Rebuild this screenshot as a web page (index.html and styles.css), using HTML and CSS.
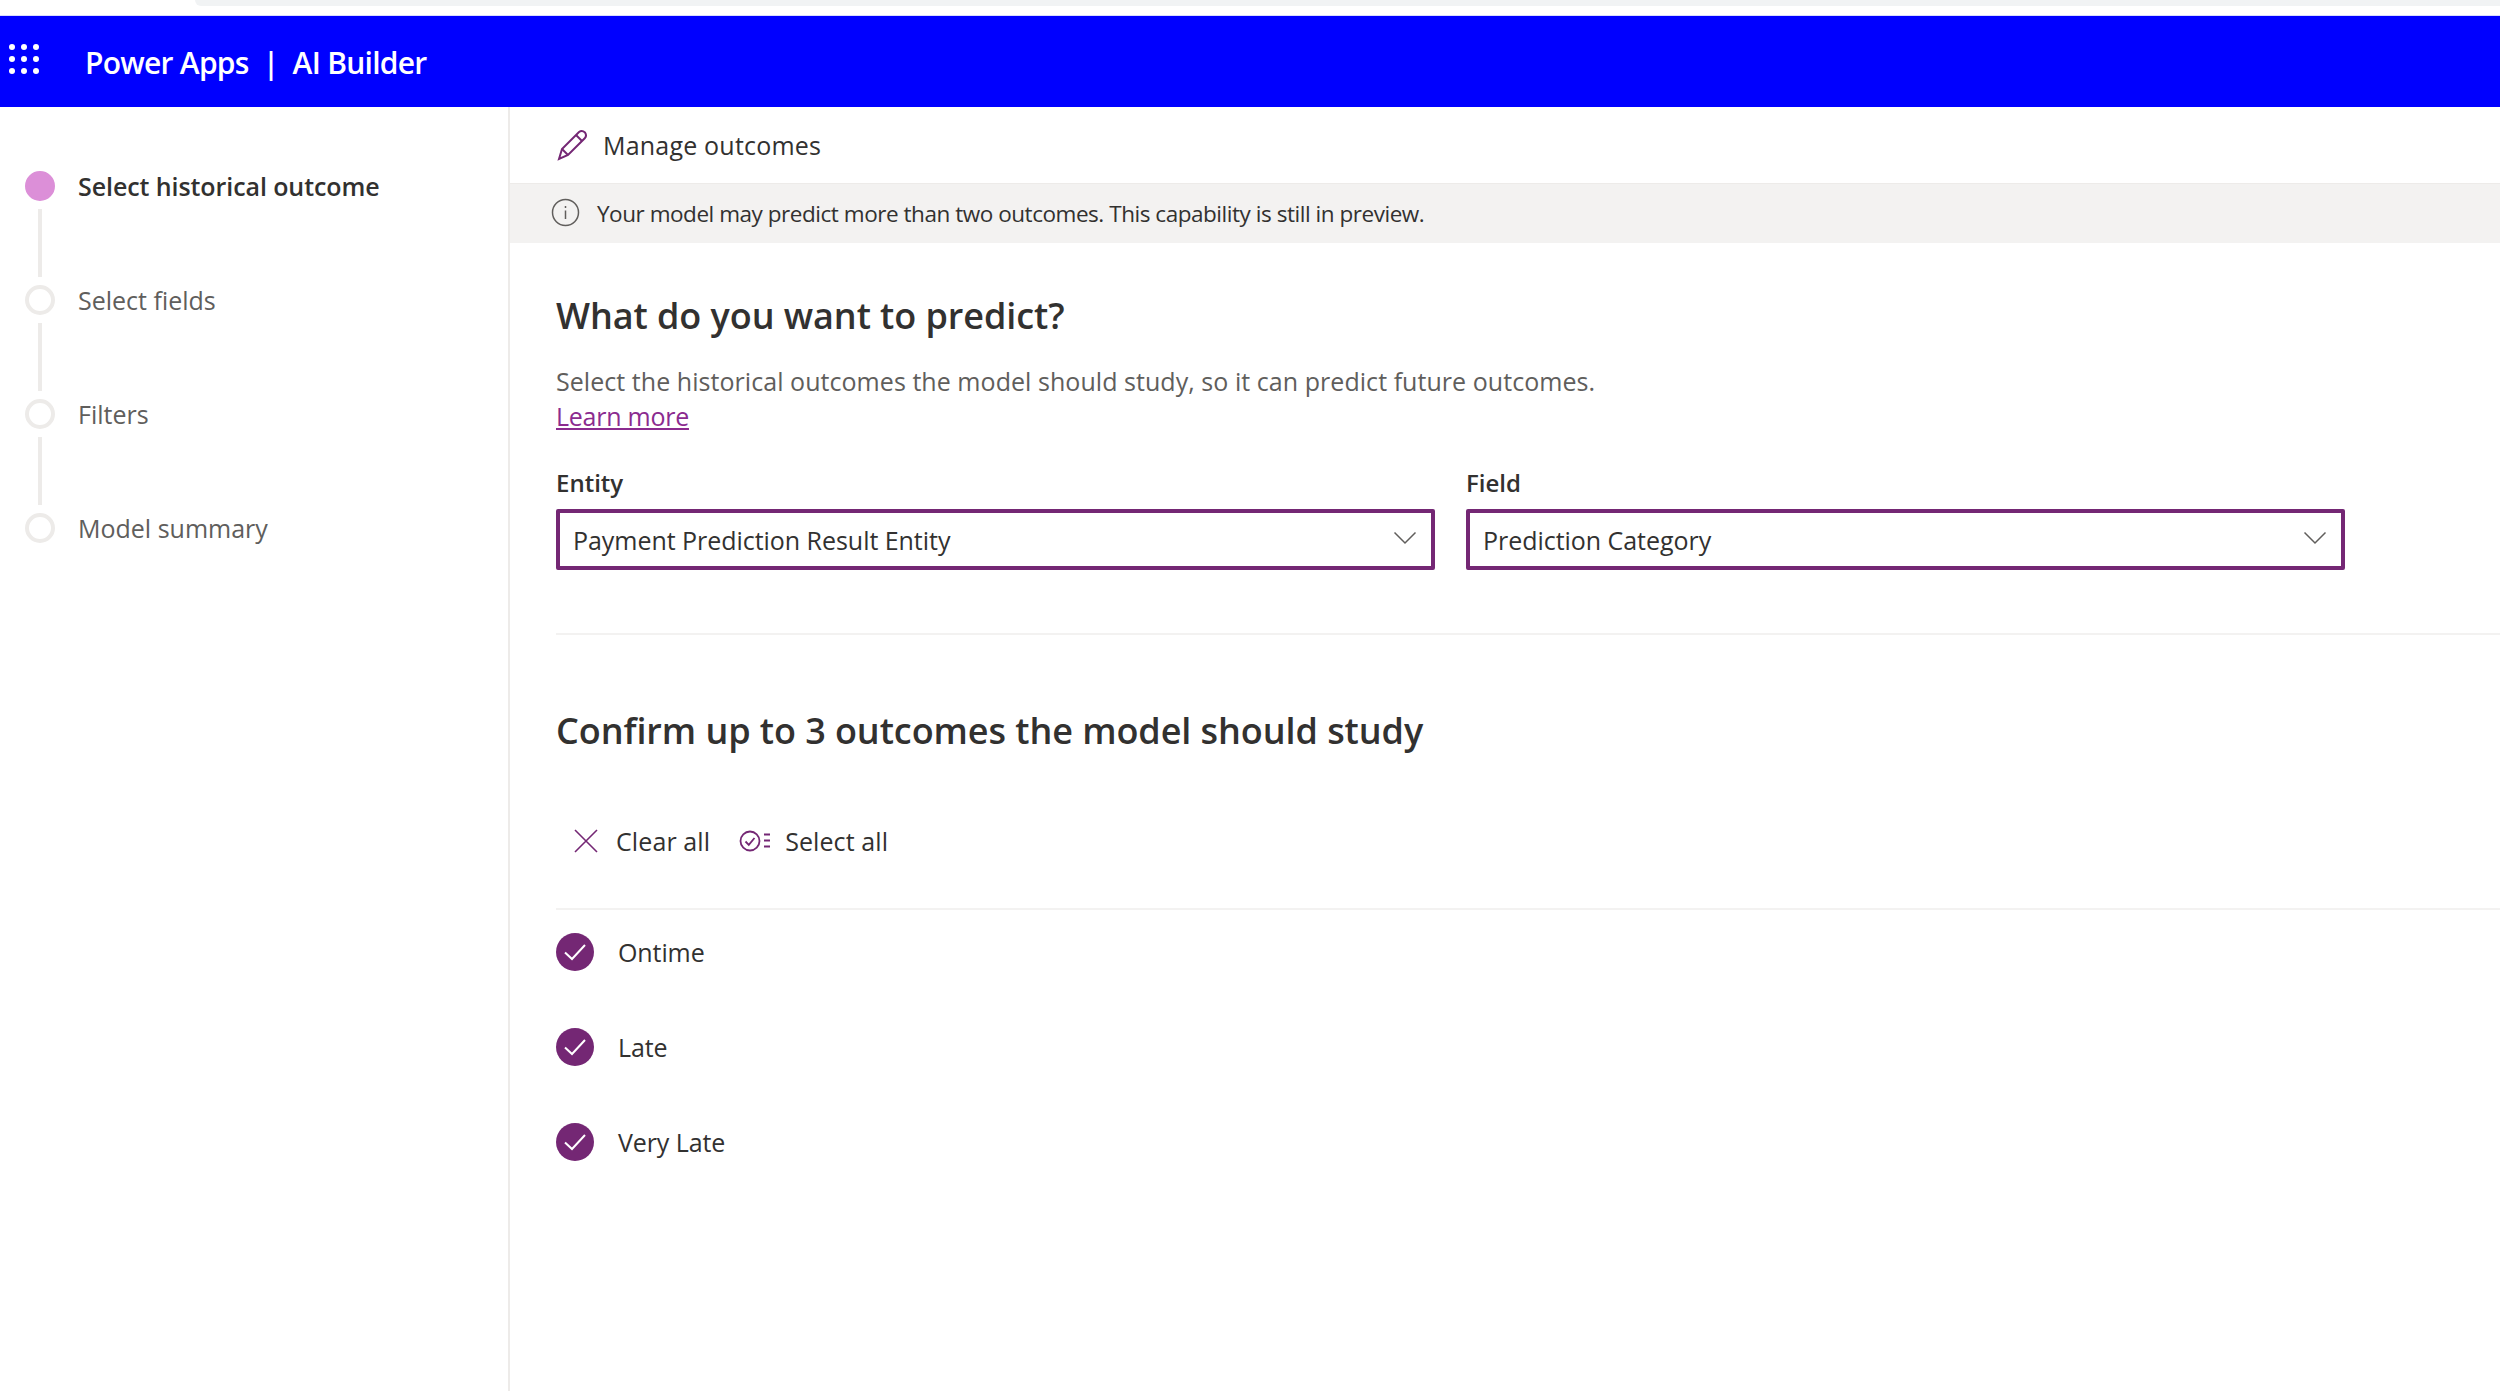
FILE: index.html
```html
<!DOCTYPE html>
<html lang="en">
<head>
<meta charset="utf-8">
<title>Power Apps | AI Builder</title>
<link rel="stylesheet" href="styles.css">
</head>
<body>
<div class="browser-strip"><div class="browser-pill"></div></div>
<header class="topbar">
  <svg class="waffle" width="32" height="32" viewBox="0 0 32 32" fill="#fff"><circle cx="4" cy="4" r="3"/><circle cx="16" cy="4" r="3"/><circle cx="28" cy="4" r="3"/><circle cx="4" cy="16" r="3"/><circle cx="16" cy="16" r="3"/><circle cx="28" cy="16" r="3"/><circle cx="4" cy="28" r="3"/><circle cx="16" cy="28" r="3"/><circle cx="28" cy="28" r="3"/></svg>
  <div class="brand">Power Apps&nbsp; |&nbsp; AI Builder</div>
</header>
<div class="shell">
  <nav class="sidebar">
    <div class="step active"><span class="dot"></span><span class="step-label">Select historical outcome</span></div>
    <div class="connector"></div>
    <div class="step"><span class="dot"></span><span class="step-label">Select fields</span></div>
    <div class="connector"></div>
    <div class="step"><span class="dot"></span><span class="step-label">Filters</span></div>
    <div class="connector"></div>
    <div class="step"><span class="dot"></span><span class="step-label">Model summary</span></div>
  </nav>
  <main class="main">
    <div class="command">
      <svg width="32" height="32" viewBox="0 0 32 32" fill="none" stroke="#742774" stroke-width="2"><path d="M3 30 L6 20 L23 3 Q26 0.8 29 3.5 Q31 6.5 29 9 L12 26 Z"/><path d="M20 6 L26 12"/><path d="M6 20 L12 26"/></svg>
      <span>Manage outcomes</span>
    </div>
    <div class="notice">
      <svg width="29" height="29" viewBox="0 0 29 29" fill="none" stroke="#605e5c" stroke-width="1.5"><circle cx="14.5" cy="14.5" r="13"/><path d="M14.5 12.5V21"/><path d="M14.5 8V10"/></svg>
      <span>Your model may predict more than two outcomes. This capability is still in preview.</span>
    </div>
    <section class="predict">
      <h1 class="title">What do you want to predict?</h1>
      <p class="desc">Select the historical outcomes the model should study, so it can predict future outcomes.</p>
      <a class="learn" href="#">Learn more</a>
      <div class="fields">
        <div class="field">
          <label class="field-label">Entity</label>
          <div class="select"><span>Payment Prediction Result Entity</span>
            <svg width="24" height="14" viewBox="0 0 24 14" fill="none" stroke="#605e5c" stroke-width="1.5"><path d="M1.5 1.5 L12 12 L22.5 1.5"/></svg></div>
        </div>
        <div class="field">
          <label class="field-label">Field</label>
          <div class="select"><span>Prediction Category</span>
            <svg width="24" height="14" viewBox="0 0 24 14" fill="none" stroke="#605e5c" stroke-width="1.5"><path d="M1.5 1.5 L12 12 L22.5 1.5"/></svg></div>
        </div>
      </div>
    </section>
    <section class="confirm">
      <h2 class="title">Confirm up to 3 outcomes the model should study</h2>
      <div class="actions">
        <div class="action clear">
          <svg width="24" height="24" viewBox="0 0 24 24" fill="none" stroke="#742774" stroke-width="1.6"><path d="M1 1L23 23M23 1L1 23"/></svg>
          <span>Clear all</span>
        </div>
        <div class="action select-all">
          <svg width="32" height="24" viewBox="0 0 32 24" fill="none" stroke="#742774" stroke-width="1.8"><circle cx="11" cy="12" r="9.5"/><path d="M6.5 12.5L9.8 15.8L15.5 9"/><path d="M25 5.5H31M25 11.5H31M25 17.5H31" stroke-width="2"/></svg>
          <span>Select all</span>
        </div>
      </div>
      <ul class="outcomes">
        <li class="outcome"><svg width="38" height="38" viewBox="0 0 38 38"><circle cx="19" cy="19" r="19" fill="#742774"/><path d="M9 19.5L16 26L29 12" fill="none" stroke="#fff" stroke-width="2"/></svg><span>Ontime</span></li>
        <li class="outcome"><svg width="38" height="38" viewBox="0 0 38 38"><circle cx="19" cy="19" r="19" fill="#742774"/><path d="M9 19.5L16 26L29 12" fill="none" stroke="#fff" stroke-width="2"/></svg><span>Late</span></li>
        <li class="outcome"><svg width="38" height="38" viewBox="0 0 38 38"><circle cx="19" cy="19" r="19" fill="#742774"/><path d="M9 19.5L16 26L29 12" fill="none" stroke="#fff" stroke-width="2"/></svg><span>Very Late</span></li>
      </ul>
    </section>
  </main>
</div>
</body>
</html>
```

FILE: styles.css
```css
* { box-sizing: border-box; }
html, body { margin: 0; height: 100%; }
body {
  width: 2500px;
  height: 1391px;
  overflow: hidden;
  background: #fff;
  color: #323130;
  font-family: "Open Sans", "Noto Sans", sans-serif;
  font-size: 24px;
  display: flex;
  flex-direction: column;
}
.browser-strip { height: 16px; padding-left: 195px; border-bottom: 1px solid #d8dcff; }
.browser-pill { height: 6px; background: #f1f3f4; border-radius: 0 0 0 20px; }
.topbar {
  height: 91px;
  background: #0000ff;
  color: #fff;
  display: flex;
  align-items: center;
  padding-left: 8px;
  flex: none;
}
.waffle { margin-top: -5px; }
.brand { margin-left: 45px; font-size: 30px; font-weight: 600; letter-spacing: -.74px; margin-top: 1px; white-space: nowrap; }
.shell { flex: 1; display: flex; min-height: 0; }
.sidebar {
  width: 510px;
  flex: none;
  border-right: 2px solid #edebe9;
  padding: 64px 0 0 25px;
}
.step { display: flex; align-items: center; height: 30px; }
.dot { width: 30px; height: 30px; border-radius: 50%; border: 4px solid #edebe9; flex: none; }
.step.active .dot { background: #dc8fd8; border-color: #dc8fd8; }
.step-label { margin-left: 23px; color: #605e5c; font-size: 25px; letter-spacing: 0; white-space: nowrap; }
.step.active .step-label { color: #323130; font-weight: 600; letter-spacing: -.08px; }
.connector { width: 4px; height: 68px; margin: 8px 0 8px 13px; background: #edebe9; }
.main { flex: 1; min-width: 0; }
.command {
  height: 76px;
  display: flex;
  align-items: center;
  padding-left: 46px;
  font-size: 25px;
  letter-spacing: .2px;
}
.command span { margin-left: 15px; }
.notice {
  height: 60px;
  background: #f3f2f1;
  border-top: 1px solid #edebe9;
  display: flex;
  align-items: center;
  padding-left: 41px;
  font-size: 22.5px;
  letter-spacing: -.46px;
  white-space: nowrap;
}
.notice svg { margin-top: -3px; }
.notice span { margin-left: 17px; }
.predict { padding: 0 0 0 46px; }
.title { margin: 0; font-weight: 600; color: #323130; font-size: 36px; letter-spacing: -.07px; line-height: 48px; white-space: nowrap; }
.predict .title { padding-top: 49px; }
.desc { margin: 24px 0 0; color: #605e5c; font-size: 25px; letter-spacing: .05px; line-height: 35px; white-space: nowrap; }
.learn { display: block; color: #8b2b8f; font-size: 25px; letter-spacing: -.25px; line-height: 35px; width: max-content; }
.fields {
  display: flex;
  gap: 31px;
  margin-top: 32px;
  padding-bottom: 63px;
  border-bottom: 2px solid #f3f2f1;
}
.field { width: 879px; }
.field-label { display: block; font-weight: 600; font-size: 24px; letter-spacing: 0; line-height: 34px; margin-bottom: 9px; }
.select {
  height: 61px;
  border: 4px solid #742774;
  border-radius: 2px;
  display: flex;
  align-items: center;
  justify-content: space-between;
  padding: 0 14px 0 13px;
  font-size: 25px;
  letter-spacing: -.04px;
}
.select span { margin-top: 1px; }
.select svg { margin-top: -3px; }
.confirm { padding-left: 46px; }
.confirm .title { padding-top: 72px; font-size: 36px; }
.actions {
  display: flex;
  align-items: center;
  padding-left: 18px;
  margin-top: 64px;
  height: 44px;
}
.action { display: flex; align-items: center; font-size: 25px; letter-spacing: .1px; white-space: nowrap; }
.action.clear span { margin-left: 18px; }
.action.select-all { margin-left: 29px; }
.action.select-all span { margin-left: 14px; }
.outcomes {
  list-style: none;
  margin: 45px 0 0;
  padding: 23px 0 0;
  border-top: 2px solid #f3f2f1;
}
.outcome { display: flex; align-items: center; height: 38px; margin-bottom: 57px; font-size: 25px; letter-spacing: -.1px; }
.outcome span { margin-left: 24px; }
```
